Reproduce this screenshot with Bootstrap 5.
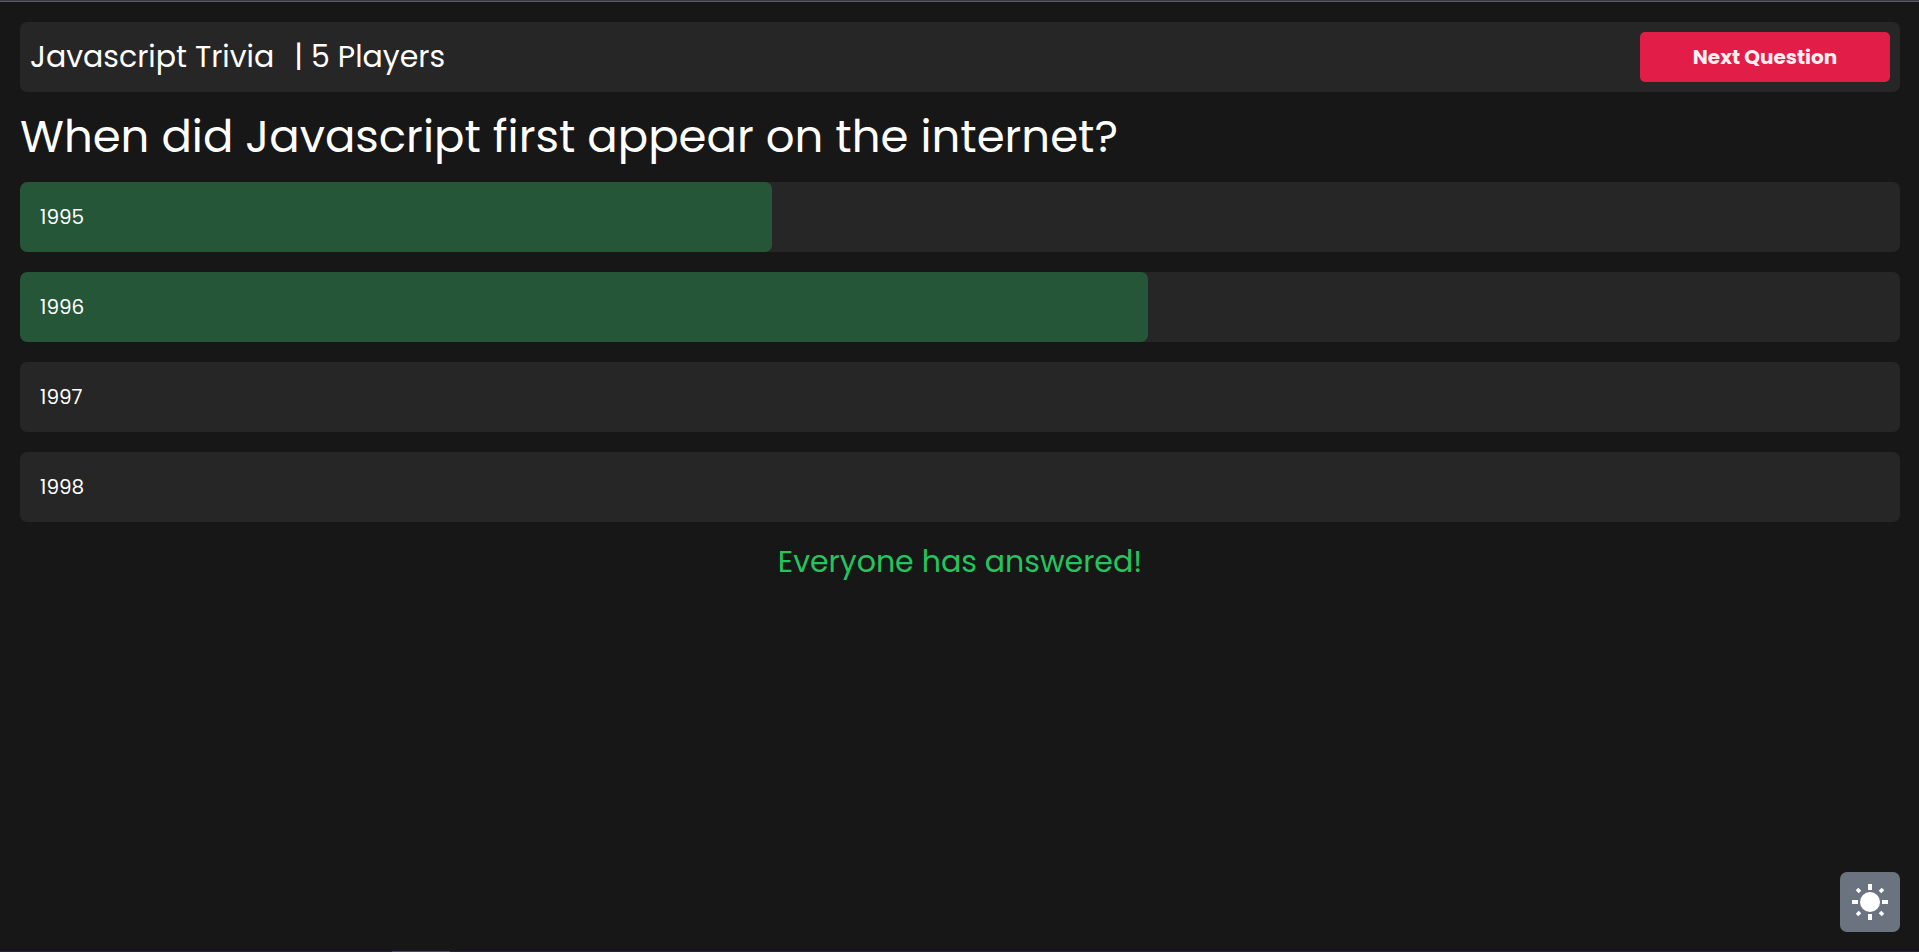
<!DOCTYPE html>
<html lang="en">
<head>
<meta charset="utf-8">
<meta name="viewport" content="width=device-width, initial-scale=1">
<title>Javascript Trivia</title>
<link href="https://cdn.jsdelivr.net/npm/bootstrap@5.3.0/dist/css/bootstrap.min.css" rel="stylesheet">
<style>
  body { background: #171717; color: #fff; font-family: Poppins, Inter, sans-serif; font-size: 20px; line-height: 30px; }
  .edge-top { height: 2px; background: #3b3a42; border-bottom: 1px solid #5b5a66; }
  .edge-bottom { height: 1px; background: #2a2138; }
  .edge-mark { width: 3%; margin-left: 392px; background: #4c4478; }
  .page-body { padding: 20px 19px 20px 20px; gap: 20px; }
  .panel { background: #262626; border-radius: 7px; }
  .top-panel { padding: 10px; }
  .title-text { font-size: 30px; line-height: 40px; }
  .title-row { gap: 20px; }
  .question { font-size: 45px; line-height: 50px; }
  .next-btn { --bs-btn-color: #fff1f2; --bs-btn-bg: #e11d48; --bs-btn-hover-color: #fff1f2; --bs-btn-hover-bg: #be123c; width: 250px; height: 50px; border: 0; border-radius: 5px; font-size: 20px; font-weight: 700; }
  .answer { height: 70px; overflow: hidden; }
  .answer-fill { background: #255638; border-radius: 7px; }
  .answer-label { padding: 20px; }
  .done { color: #22c55e; }
  .theme-btn { right: 19px; bottom: 20px; width: 60px; height: 60px; background: #6b7280; border: 0; border-radius: 7px; }
</style>
</head>
<body>
<div class="d-flex flex-column min-vh-100">
  <div class="edge-top"></div>
  <main class="page-body d-flex flex-column flex-grow-1">
    <header class="panel top-panel d-flex justify-content-between align-items-center">
      <div class="title-row title-text d-flex">
        <span>Javascript Trivia</span>
        <span>| 5 Players</span>
      </div>
      <button type="button" class="btn next-btn">Next Question</button>
    </header>
    <h1 class="question fw-normal m-0">When did Javascript first appear on the internet?</h1>
    <div class="panel answer position-relative">
      <div class="answer-fill position-absolute top-0 start-0 h-100" style="width: 40%"></div>
      <div class="answer-label position-relative">1995</div>
    </div>
    <div class="panel answer position-relative">
      <div class="answer-fill position-absolute top-0 start-0 h-100" style="width: 60%"></div>
      <div class="answer-label position-relative">1996</div>
    </div>
    <div class="panel answer">
      <div class="answer-label">1997</div>
    </div>
    <div class="panel answer">
      <div class="answer-label">1998</div>
    </div>
    <p class="done title-text text-center m-0">Everyone has answered!</p>
  </main>
  <div class="edge-bottom d-flex"><div class="edge-mark"></div></div>
</div>
<button type="button" class="theme-btn position-fixed d-flex align-items-center justify-content-center p-0" aria-label="Toggle theme">
  <svg width="40" height="40" viewBox="-20 -20 40 40" aria-hidden="true">
    <circle r="10" fill="#fff"/>
    <g stroke="#fff" stroke-width="4">
      <path d="M0-18v6M0 12v6M-18 0h6M12 0h6"/>
      <path d="M-13-13l3 3M13-13l-3 3M-13 13l3-3M13 13l-3-3" stroke-width="3.6"/>
    </g>
  </svg>
</button>
<script src="https://cdn.jsdelivr.net/npm/bootstrap@5.3.0/dist/js/bootstrap.bundle.min.js"></script>
</body>
</html>
